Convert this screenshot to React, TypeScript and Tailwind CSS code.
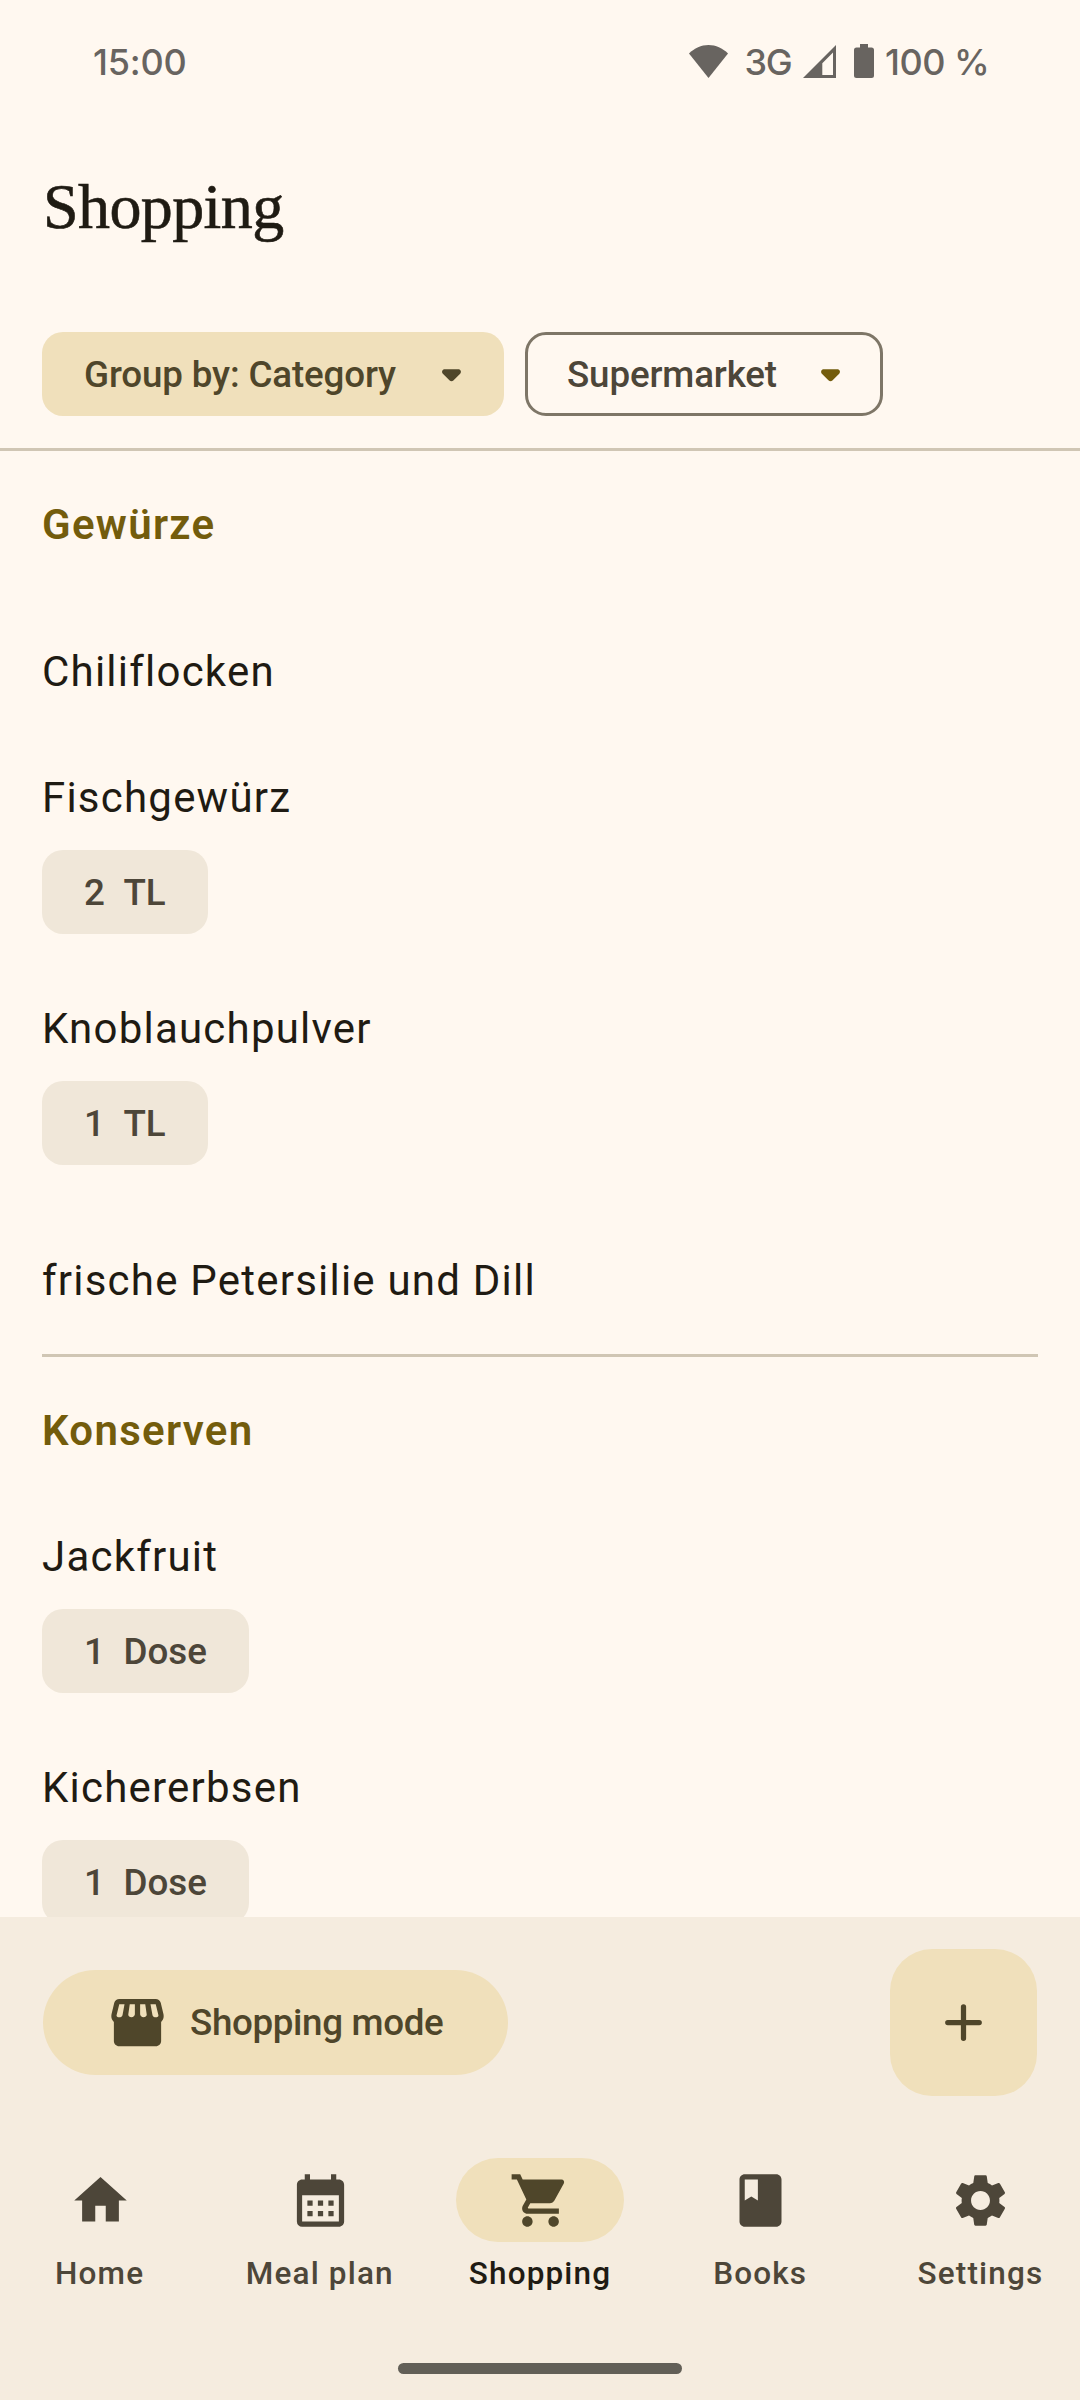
import type { ReactNode } from "react";
import { MdBook, MdCalendarMonth, MdHome, MdSettings, MdShoppingCart } from "react-icons/md";

type Item = { name: string; amount?: string; unit?: string };
type Group = { title: string; items: Item[] };

const groups: Group[] = [
  {
    title: "Gewürze",
    items: [
      { name: "Chiliflocken" },
      { name: "Fischgewürz", amount: "2", unit: "TL" },
      { name: "Knoblauchpulver", amount: "1", unit: "TL" },
      { name: "frische Petersilie und Dill" },
    ],
  },
  {
    title: "Konserven",
    items: [
      { name: "Jackfruit", amount: "1", unit: "Dose" },
      { name: "Kichererbsen", amount: "1", unit: "Dose" },
    ],
  },
];

const tabs = [
  { label: "Home", Icon: MdHome },
  { label: "Meal plan", Icon: MdCalendarMonth },
  { label: "Shopping", Icon: MdShoppingCart, active: true },
  { label: "Books", Icon: MdBook },
  { label: "Settings", Icon: MdSettings },
];

function StatusBar() {
  return (
    <div className="flex h-[126px] items-start justify-between pt-[38px] pr-[93px] pl-[93px] font-['Inter'] text-[36px] leading-[48px] font-medium text-[#686460]">
      <span className="tracking-[-0.2px]">15:00</span>
      <div className="flex items-start">
        <svg className="mt-[7px] h-[33px] w-[39px]" viewBox="0 0 39 33" fill="currentColor">
          <path d="M0 8.600C5.400 3 12.200 0 19.500 0S33.600 3 39 8.600L19.500 33z" />
        </svg>
        <span className="ml-[17px] w-[49px] tracking-[-1.2px]">3G</span>
        <svg className="mt-[7px] ml-[9px] h-[33px] w-[33px]" viewBox="0 0 33 33" fill="currentColor" fillRule="evenodd">
          <path d="M33 0V33H0zM30 7.500L19.300 18.200V30H30z" />
        </svg>
        <svg className="mt-[6px] ml-[18.500px] h-[34px] w-[20px]" viewBox="0 0 20 34" fill="currentColor">
          <path d="M6 0h8v3.500h3.500A2.500 2.500 0 0 1 20 6v25.500a2.500 2.500 0 0 1-2.500 2.500h-15A2.500 2.500 0 0 1 0 31.500V6a2.500 2.500 0 0 1 2.500-2.500H6z" />
        </svg>
        <span className="ml-[11px] w-[102px] tracking-[-0.5px] whitespace-nowrap">100 %</span>
      </div>
    </div>
  );
}

function DropIcon() {
  return (
    <svg className="size-[63px]" viewBox="0 0 24 24" fill="currentColor">
      <path d="M8.710 11.710l2.590 2.590c.39.39 1.020.39 1.410 0l2.590-2.590c.63-.63.180-1.710-.710-1.710H9.410c-.89 0-1.330 1.080-.7 1.710z" />
    </svg>
  );
}

function FilterChip({ children, selected }: { children: ReactNode; selected?: boolean }) {
  return (
    <button
      className={
        selected
          ? "flex h-[84px] w-[462px] items-center justify-between rounded-[21px] bg-[#f0e0bb] pr-[21px] pl-[42px] text-[#4f462a]"
          : "flex h-[84px] w-[358px] items-center justify-between rounded-[21px] border-3 border-[#7e7667] pr-[18px] pl-[39px] text-[#4d4639]"
      }
    >
      <span className="pt-[2px] text-[36.75px] leading-[52px] font-medium tracking-[-0.15px] whitespace-nowrap">
        {children}
      </span>
      <span className={selected ? "text-[#4f462a]" : "text-[#735c0c]"}>
        <DropIcon />
      </span>
    </button>
  );
}

function ListItem({ item }: { item: Item }) {
  const hasAmount = item.amount !== undefined;
  return (
    <li className={hasAmount ? "flex flex-col items-start py-[31.5px]" : "pt-[52.5px] pb-[31.5px]"}>
      <div className="text-[42px] leading-[63px] tracking-[1.22px]">{item.name}</div>
      {hasAmount && (
        <div className="mt-[21px] flex h-[84px] items-center gap-[18.500px] rounded-[21px] bg-[#f0e7d9] px-[42px] pt-[2px] text-[36.75px] leading-[52px] font-medium text-[#4d4639]">
          <span>{item.amount}</span>
          <span>{item.unit}</span>
        </div>
      )}
    </li>
  );
}

function StoreIcon() {
  return (
    <svg className="size-[63px]" viewBox="0 0 24 24" fill="currentColor" fillRule="evenodd">
      <path d="M5.050 3H18.950C19.800 3 20.600 3.500 20.850 4.500L21.900 8.900C22.100 9.900 21.900 10.800 21 11.800V19C21 20.100 20.100 21 19 21H5C3.900 21 3 20.100 3 19V11.800C2.100 10.800 1.900 9.900 2.100 8.900L3.150 4.500C3.400 3.500 4.200 3 5.050 3ZM5.050 5L4.050 9.100C3.900 9.650 4.300 10 5 10S6.200 9.700 6.320 9L7.050 5ZM9.050 5L8.500 8.900C8.400 9.600 9 10 9.700 10S11 9.500 11 8.900V5ZM13 5V8.900C13 9.500 13.600 10 14.300 10S15.600 9.600 15.500 8.900L14.950 5ZM16.950 5L17.680 9C17.800 9.700 18.300 10 19 10S20.100 9.650 19.950 9.100L18.950 5Z" />
    </svg>
  );
}

export default function App() {
  return (
    <div className="flex h-[2400px] w-[1080px] flex-col overflow-hidden bg-[#fff8f0] font-['Roboto',sans-serif] text-[#1f1b13]">
      <StatusBar />
      <header className="h-[206px] px-[43px] pt-[41px]">
        <h1 className="font-['Liberation_Serif',serif] text-[64px] leading-[80px] tracking-[-0.6px] [-webkit-text-stroke:0.6px_#1f1b13]">
          Shopping
        </h1>
      </header>
      <div className="flex h-[119px] shrink-0 gap-[21px] border-b-3 border-[#d0c6b4] px-[42px]">
        <FilterChip selected>Group by: Category</FilterChip>
        <FilterChip>Supermarket</FilterChip>
      </div>

      <main className="h-[1466px] shrink-0 overflow-hidden px-[42px]">
        {groups.map((group, index) => (
          <section key={group.title} className={index > 0 ? "mt-[10.5px] border-t-3 border-[#d0c6b4]" : ""}>
            <h2 className="pt-[42px] pb-[31.5px] text-[42px] leading-[63px] font-semibold tracking-[1.3px] text-[#735c0c]">
              {group.title}
            </h2>
            <ul>
              {group.items.map((item) => (
                <ListItem key={item.name} item={item} />
              ))}
            </ul>
          </section>
        ))}
      </main>

      <footer className="flex h-[483px] shrink-0 flex-col bg-[#f5ecdf]">
        <div className="flex items-center justify-between pt-[32px] pr-[43px] pl-[43px]">
          <button className="flex h-[105px] w-[465px] items-center gap-[21px] rounded-full bg-[#f0e0bb] pl-[63px] text-[#4f462a]">
            <StoreIcon />
            <span className="text-[36.75px] leading-[52px] font-medium tracking-[-0.35px] whitespace-nowrap">
              Shopping mode
            </span>
          </button>
          <button className="flex size-[147px] items-center justify-center rounded-[42px] bg-[#f0e0bb] text-[#4f462a]">
            <svg className="size-[63px]" viewBox="0 0 24 24" stroke="currentColor" strokeWidth="2" strokeLinecap="round">
              <path d="M12 6v12M6 12h12" />
            </svg>
          </button>
        </div>
        <nav className="mt-[62px] grid grid-cols-5 gap-[21px]">
          {tabs.map(({ label, Icon, active }) => (
            <div key={label} className="flex flex-col items-center">
              <div
                className={
                  active
                    ? "flex h-[84px] w-[168px] items-center justify-center rounded-full bg-[#f0e0bb] pl-px text-[#4f462a]"
                    : "flex h-[84px] w-[168px] items-center justify-center pl-px text-[#4d4639]"
                }
              >
                <Icon size={63} />
              </div>
              <span
                className={
                  active
                    ? "mt-[11px] text-[31.5px] leading-[42px] font-medium tracking-[1.15px] whitespace-nowrap"
                    : "mt-[11px] text-[31.5px] leading-[42px] font-medium tracking-[1.15px] whitespace-nowrap text-[#4d4639]"
                }
              >
                {label}
              </span>
            </div>
          ))}
        </nav>
        <div className="mx-auto mt-[68px] h-[11px] w-[284px] rounded-full bg-[#625f57]" />
      </footer>
    </div>
  );
}
